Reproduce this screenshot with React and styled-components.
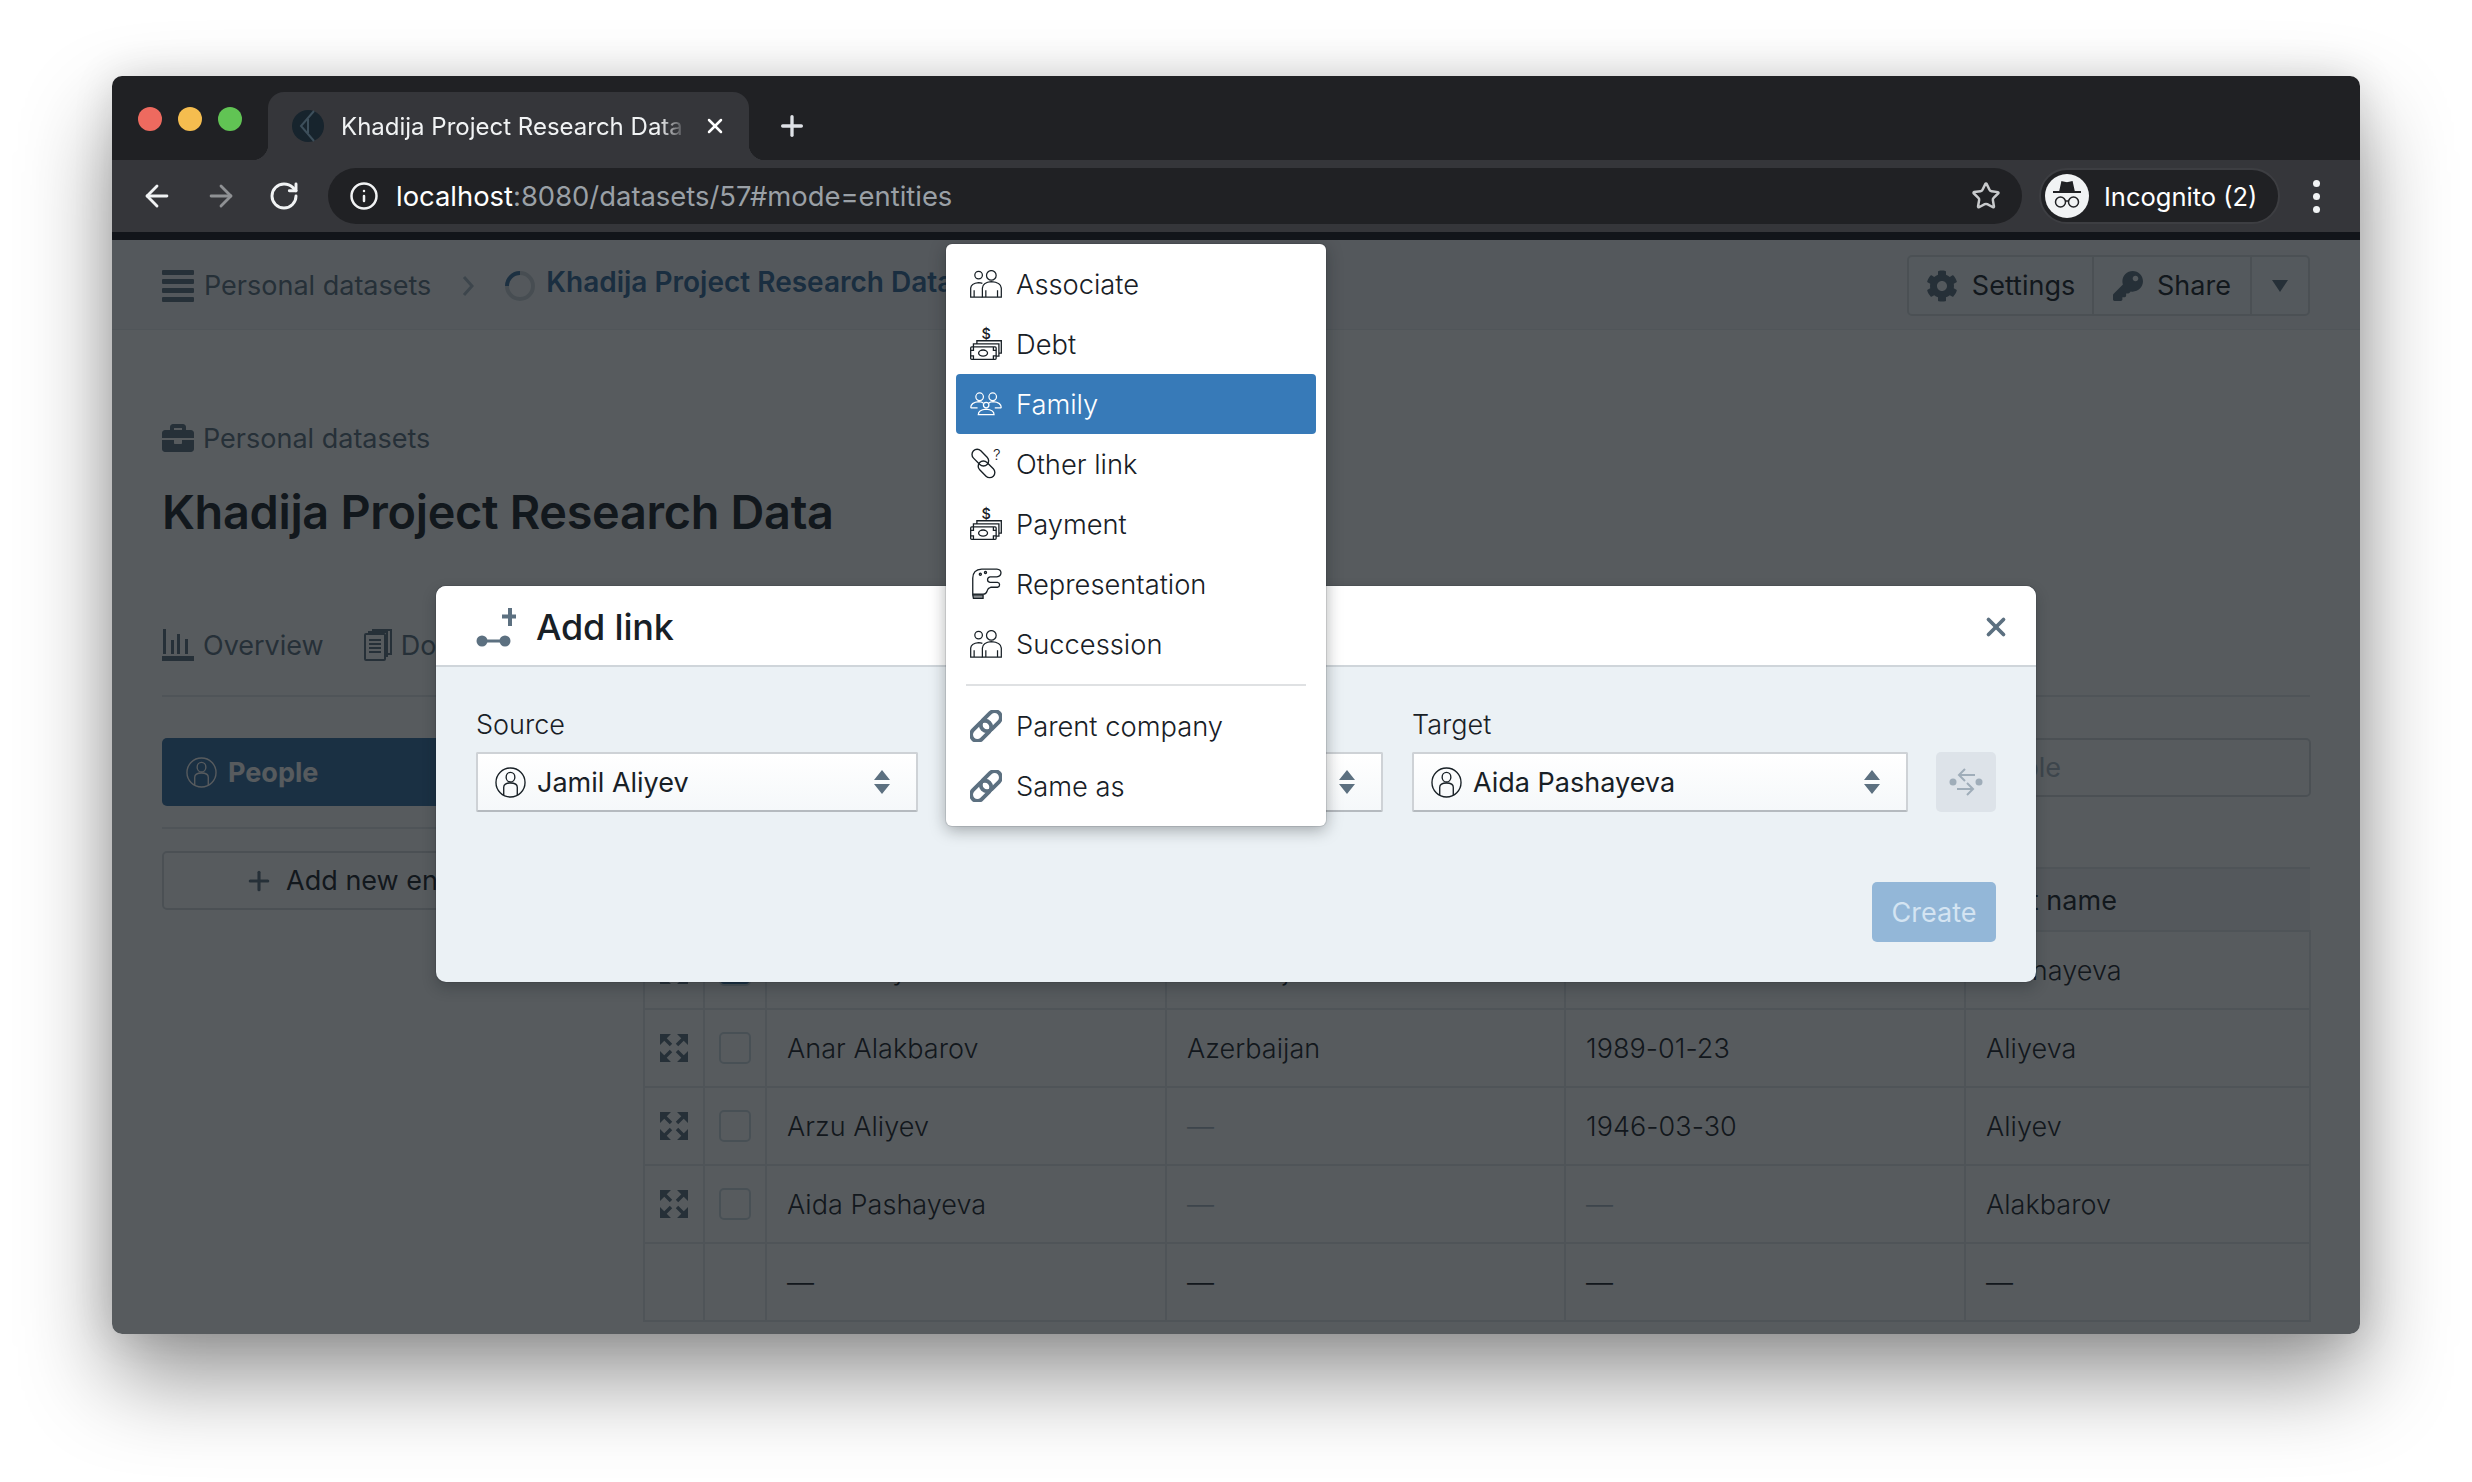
import React from 'react';
import styled, { createGlobalStyle } from 'styled-components';
import { ArrowLeft, ArrowRight, RotateCw, Info, Star, Plus, X } from 'lucide-react';
import { FaCog, FaKey, FaBriefcase } from 'react-icons/fa';

const Global = createGlobalStyle`
  html, body { margin: 0; padding: 0; background: #fff; }
  * { box-sizing: border-box; }
  body { font-family: Inter, "Liberation Sans", sans-serif; color: #182026; }
`;

const Screen = styled.div`
  width: 2472px;
  height: 1482px;
  padding: 76px 112px 148px;
  background: #fff;
  overflow: hidden;
`;

const Browser = styled.div`
  height: 1258px;
  display: flex;
  flex-direction: column;
  border-radius: 10px;
  overflow: hidden;
  box-shadow: 0 44px 90px rgba(0, 0, 0, 0.42), 0 0 40px rgba(0, 0, 0, 0.12);
`;

const TabBar = styled.div`
  height: 84px;
  flex: none;
  display: flex;
  align-items: flex-end;
  background: #202124;
  padding-left: 26px;
`;

const Light = styled.span`
  width: 24px;
  height: 24px;
  border-radius: 50%;
  margin: 0 16px 29px 0;
  background: ${(p) => p.$color};
`;

const Tab = styled.div`
  position: relative;
  width: 481px;
  height: 68px;
  margin-left: 10px;
  padding: 0 20px 0 24px;
  display: flex;
  align-items: center;
  background: #35363a;
  border-radius: 16px 16px 0 0;
  color: #f1f3f4;

  &::before, &::after {
    content: '';
    position: absolute;
    bottom: 0;
    width: 16px;
    height: 16px;
  }
  &::before {
    left: -16px;
    background: radial-gradient(circle at 0 0, transparent 16px, #35363a 16.5px);
  }
  &::after {
    right: -16px;
    background: radial-gradient(circle at 100% 0, transparent 16px, #35363a 16.5px);
  }
`;

const TabTitle = styled.span`
  width: 346px;
  margin: 0 16px 0 17px;
  flex: none;
  font-size: 24px;
  white-space: nowrap;
  overflow: hidden;
  -webkit-mask-image: linear-gradient(90deg, #000 92%, transparent 100%);
  mask-image: linear-gradient(90deg, #000 92%, transparent 100%);
`;

const NewTab = styled.div`
  display: flex;
  align-self: center;
  margin: 16px 0 0 27px;
  color: #dee1e6;
`;

const Toolbar = styled.div`
  height: 72px;
  flex: none;
  display: flex;
  align-items: center;
  padding-left: 28px;
  background: #35363a;
`;

const NavIcon = styled.span`
  display: flex;
  width: 64px;
  color: ${(p) => (p.$off ? '#8f9194' : '#f1f3f4')};
`;

const Omnibox = styled.div`
  width: 1694px;
  height: 56px;
  margin-left: -4px;
  padding: 0 21px 0 21px;
  display: flex;
  align-items: center;
  border-radius: 28px;
  background: #202124;
  color: #f1f3f4;
`;

const Url = styled.span`
  flex: 1;
  margin-left: 17px;
  font-size: 27.4px;
  color: #fff;
  span { color: #9aa0a6; }
`;

const Incognito = styled.div`
  width: 241px;
  height: 56px;
  margin-left: 17px;
  padding-left: 4px;
  display: flex;
  align-items: center;
  border-radius: 28px;
  border: 2px solid #3d3e42;
  background: #202124;
  color: #fff;
  font-size: 25.5px;
`;

const IncognitoFace = styled.span`
  width: 44px;
  height: 44px;
  margin-right: 15px;
  display: flex;
  align-items: center;
  justify-content: center;
  border-radius: 50%;
  background: #f1f3f4;
`;

const Kebab = styled.div`
  margin-left: 33px;
  display: flex;
  flex-direction: column;
  gap: 6px;
  span { width: 7px; height: 7px; border-radius: 50%; background: #f1f3f4; }
`;

const Strip = styled.div`
  height: 8px;
  flex: none;
  background: #12151a;
`;

const Page = styled.div`
  position: relative;
  flex: 1;
  background: #fff;
  overflow: hidden;
  font-size: 27px;
`;

const Overlay = styled.div`
  position: absolute;
  inset: 0;
  background: rgba(16, 22, 26, 0.7);
`;

const TopBar = styled.div`
  height: 89px;
  padding: 15px 50px 0;
  display: flex;
  align-items: flex-start;
  background: #f3f6f8;
  box-shadow: 0 1px 0 #e8ecef;
`;

const Crumb = styled.div`
  height: 61px;
  display: flex;
  align-items: center;
  gap: 10px;
  color: #5c7080;
`;

const MenuBars = styled.div`
  width: 32px;
  display: flex;
  flex-direction: column;
  gap: 4px;
  span { height: 5px; border-radius: 1px; background: #5c7080; }
`;

const Chevron = styled.svg`
  margin: 0 20px 0 21px;
`;

const CrumbTitle = styled.span`
  white-space: nowrap;
  position: relative;
  top: -4px;
  font-size: 28px;
  font-weight: 600;
  color: #34689a;
`;

const ButtonGroup = styled.div`
  position: relative;
  height: 61px;
  margin-left: auto;
  display: flex;
  border: 2px solid #d5dade;
  border-radius: 5px;
  background: #f5f8fa;
`;

const GroupButton = styled.div`
  width: ${(p) => p.$w}px;
  display: flex;
  align-items: center;
  justify-content: center;
  gap: 14px;
  color: #182026;
  border-left: ${(p) => (p.$first ? 'none' : '2px solid #d5dade')};
  svg { color: #5c7080; }
`;

const Content = styled.div`
  padding: 90px 50px 0;
`;

const Crumb2 = styled.div`
  height: 38px;
  display: flex;
  align-items: center;
  gap: 9px;
  color: #5c7080;
`;

const Heading = styled.h1`
  height: 56px;
  margin: 27px 0 0;
  font-size: 46.8px;
  line-height: 56px;
  font-weight: 600;
  letter-spacing: -0.3px;
`;

const Tabs = styled.div`
  height: 72px;
  margin-top: 85px;
  padding-bottom: 30px;
  display: flex;
  align-items: center;
  gap: 40px;
  border-bottom: 2px solid #e3e7ea;
  color: #5c7080;
`;

const TabLink = styled.div`
  display: flex;
  align-items: center;
  gap: 9px;
`;

const Main = styled.div`
  margin-top: 41px;
  display: grid;
  grid-template-columns: 398px 1fr;
  column-gap: 83px;
`;

const Side = styled.div`
  display: flex;
  flex-direction: column;
`;

const PeopleRow = styled.div`
  height: 68px;
  padding-left: 24px;
  display: flex;
  align-items: center;
  gap: 11px;
  border-radius: 5px;
  background: #356ea3;
  color: #fff;
  font-weight: 700;
`;

const SideLine = styled.div`
  height: 2px;
  margin: 21px 0 22px;
  background: #e3e7ea;
`;

const AddEntity = styled.div`
  height: 59px;
  display: flex;
  align-items: center;
  justify-content: center;
  gap: 12px;
  border: 2px solid #d5dade;
  border-radius: 5px;
  svg { color: #5c7080; }
`;

const SearchBox = styled.div`
  height: 59px;
  padding-left: 20px;
  display: flex;
  align-items: center;
  justify-content: flex-end;
  border: 2px solid #d5dade;
  border-radius: 5px;
  margin-bottom: 70px;
  color: #a7b6c2;
`;

const SearchText = styled.span`
  margin-right: 248px;
`;

const Table = styled.table`
  width: 1666px;
  table-layout: fixed;
  border-collapse: collapse;
  font-size: 27px;

  th, td {
    height: 78px;
    padding: 0 20px;
    border: 2px solid #e3e7ea;
    text-align: left;
    font-weight: 300;
    letter-spacing: 0.05px;
    white-space: nowrap;
  }
  th {
    height: 63px;
    padding-top: 2px;
    background: #f3f6f8;
    font-weight: 400;
    border-left: none;
    border-right: none;
  }
`;

const IconCell = styled.td`
  && { padding: 0; }
  text-align: center;
  svg { display: block; margin: 0 auto; color: #5c7080; }
`;

const Check = styled.span`
  display: block;
  width: 32px;
  height: 32px;
  margin: 0 auto;
  border-radius: 5px;
  border: 2px solid #ced9e0;
  background: ${(p) => (p.$on ? '#356ea3' : '#fff')};
`;

const Dash = styled.span`
  color: ${(p) => (p.$dark ? '#182026' : '#a7b6c2')};
`;

const Modal = styled.div`
  position: absolute;
  left: 324px;
  top: 346px;
  width: 1600px;
  height: 396px;
  display: flex;
  flex-direction: column;
  border-radius: 10px;
  background: #ebf1f5;
  box-shadow: 0 0 0 1px rgba(16, 22, 26, 0.1), 0 6px 14px rgba(16, 22, 26, 0.25);
  overflow: hidden;
`;

const ModalHead = styled.div`
  height: 81px;
  flex: none;
  padding: 2px 25px 0 40px;
  display: flex;
  align-items: center;
  background: #fff;
  border-bottom: 2px solid #cfd5da;
`;

const ModalTitle = styled.h3`
  flex: 1;
  margin: 0 0 0 20px;
  font-size: 36px;
  font-weight: 500;
  letter-spacing: -0.2px;
`;

const Close = styled.span`
  display: flex;
  color: #5c7080;
`;

const ModalBody = styled.div`
  flex: 1;
  padding: 39px 40px 40px 40px;
  display: flex;
  flex-direction: column;
`;

const Fields = styled.div`
  display: flex;
  align-items: flex-end;
`;

const Field = styled.div`
  width: ${(p) => p.$w}px;
  margin-right: ${(p) => p.$gap}px;
`;

const Label = styled.div`
  height: 38px;
  line-height: 38px;
  margin-bottom: 8px;
  font-size: 27px;
  font-weight: 300;
  color: #182026;
`;

const Select = styled.div`
  height: 60px;
  padding: 0 26px 0 17px;
  display: flex;
  align-items: center;
  gap: 11px;
  font-size: 27px;
  background: linear-gradient(#fff, #f5f8fa);
  border: 2px solid #ced2d6;
  border-bottom-color: #b5babf;
  border-radius: 2px;
`;

const SelectText = styled.span`
  flex: 1;
`;

const Swap = styled.div`
  width: 60px;
  height: 60px;
  display: flex;
  align-items: center;
  justify-content: center;
  border-radius: 5px;
  background: #dde3e9;
`;

const Footer = styled.div`
  margin-top: auto;
  display: flex;
  justify-content: flex-end;
`;

const Create = styled.div`
  width: 124px;
  height: 60px;
  display: flex;
  align-items: center;
  justify-content: center;
  border-radius: 5px;
  background: #93b7d8;
  color: #d4e4f2;
  font-size: 27px;
`;

const Menu = styled.div`
  position: absolute;
  left: 834px;
  top: 4px;
  width: 380px;
  padding: 10px;
  border-radius: 6px;
  background: #fff;
  box-shadow: 0 0 0 1px rgba(16, 22, 26, 0.1), 0 4px 16px rgba(16, 22, 26, 0.35);
`;

const MenuItem = styled.div`
  height: 60px;
  padding-left: 14px;
  display: flex;
  align-items: center;
  gap: 14px;
  border-radius: 4px;
  font-size: 27.3px;
  font-weight: 300;
  color: ${(p) => (p.$active ? '#fff' : '#182026')};
  background: ${(p) => (p.$active ? '#377ab8' : 'transparent')};
`;

const MenuDivider = styled.div`
  height: 2px;
  margin: 10px;
  background: #dfe1e3;
`;

const PersonCircle = ({ color = '#182026' }) => (
  <svg width="31" height="31" viewBox="0 0 32 32" fill="none" stroke={color} strokeWidth="1.4">
    <circle cx="16" cy="16" r="15" />
    <ellipse cx="16" cy="10.500" rx="4.500" ry="5" />
    <path d="M9 29v-8q0-4.500 7-4.500t7 4.500v8" />
  </svg>
);

const Carets = ({ color = '#5c7080' }) => (
  <svg width="16" height="24" viewBox="0 0 16 24" fill={color}>
    <path d="M8 0l8 10H0zM8 24L0 14h16z" />
  </svg>
);

const Associate = ({ c = '#182026' }) => (
  <svg width="32" height="28" viewBox="0 0 93 80" fill="none" stroke={c} strokeWidth="3.600">
    <circle cx="25" cy="14" r="11" />
    <circle cx="62" cy="15" r="14" />
    <path d="M36 78V52q1-17 26-19 28 2 29 19v26zM46 78V58M80 78V58" />
    <path d="M36 78H2V52q1-14 23-16 6 0 11 2M12 78V58" />
  </svg>
);

const Money = () => (
  <svg width="32" height="32" viewBox="0 0 93 93" overflow="visible" fill="none" stroke="#182026" strokeWidth="3.800">
    <text x="47" y="32" textAnchor="middle" fontSize="42" fontWeight="500" fill="#182026" stroke="none" fontFamily="Inter, sans-serif">$</text>
    <rect x="2" y="55" width="74" height="36" rx="3" />
    <ellipse cx="38" cy="73" rx="13" ry="9" />
    <path d="M2 65h8v-10M76 65h-8V55M2 81h8v10M76 81h-8v10" />
    <path d="M10 55V46h74v36h-8M20 46V37h71v36h-7" />
  </svg>
);

const Family = () => (
  <svg width="32" height="26" viewBox="0 0 93 70" fill="none" stroke="#fff" strokeWidth="3.600">
    <circle cx="28" cy="14" r="11" />
    <circle cx="66" cy="14" r="11" />
    <circle cx="47" cy="38" r="8" />
    <path d="M2 46q0-16 24-18 8 0 12 4M91 46q0-16-24-18-8 0-12 4M2 46h20M91 46H72" />
    <path d="M24 66q0-14 23-16 23 2 23 16z" />
  </svg>
);

const OtherLink = () => (
  <svg width="32" height="32" viewBox="0 0 93 93" overflow="visible" fill="none" stroke="#182026" strokeWidth="4">
    <rect x="-28" y="-15" width="56" height="30" rx="15" transform="translate(30 28) rotate(45)" />
    <rect x="-28" y="-15" width="56" height="30" rx="15" transform="translate(48 62) rotate(45)" />
    <text x="78" y="36" textAnchor="middle" fontSize="44" fill="#182026" stroke="none" fontFamily="Inter, sans-serif">?</text>
  </svg>
);

const Hand = () => (
  <svg width="32" height="32" viewBox="0 0 93 93" fill="none" stroke="#182026" strokeWidth="3.800">
    <path d="M8 78V30Q8 4 34 3h44q12 1 12 11T78 26H58q-7 2-7 8t7 8h22q6 1 6 7t-6 7H60q-8 2-10 10-3 10-12 10H8z" />
    <path d="M8 78h30v10H10z" fill="#182026" fillOpacity=".5" />
    <circle cx="30" cy="18" r="3" />
    <circle cx="45" cy="13" r="3" />
  </svg>
);

const ChainIcon = () => (
  <svg width="32" height="32" viewBox="0 0 33 33" fill="none" stroke="#5c7080" strokeWidth="4">
    <rect x="-12" y="-6.500" width="24" height="13" rx="6.500" transform="translate(21.500 11.500) rotate(-45)" />
    <rect x="-12" y="-6.500" width="24" height="13" rx="6.500" transform="translate(11.500 21.500) rotate(-45)" />
  </svg>
);

const Expand = () => (
  <svg width="28" height="28" viewBox="0 0 28 28" fill="currentColor" stroke="currentColor">
    <path d="M0 0h11L0 11zM28 0v11L17 0zM0 28V17l11 11zM28 28H17l11-11z" stroke="none" />
    <path d="M4 4l7 7M24 4l-7 7M4 24l7-7M24 24l-7-7" strokeWidth="3.500" />
  </svg>
);

const ChartIcon = () => (
  <svg width="32" height="32" viewBox="0 0 32 32" fill="#5c7080">
    <path d="M1 0h3v25H1zM9 11h3v14H9zM15 5h3v20h-3zM23 10h3v15h-3zM0 27h32v5H0z" />
  </svg>
);

const DocsIcon = () => (
  <svg width="28" height="32" viewBox="0 0 28 32" fill="none" stroke="#5c7080" strokeWidth="2">
    <rect x="1" y="5" width="20" height="26" rx="1" />
    <path d="M5 5V3h18v24h-2M9 3V1h18v24h-4M5 11h12M5 15h12M5 19h12M5 23h12" />
  </svg>
);

const LinkPlus = () => (
  <svg width="40" height="40" viewBox="0 0 40 40">
    <path d="M34 1v18M26 9.500h17" stroke="#5c7080" strokeWidth="4" />
    <circle cx="6" cy="34" r="5.500" fill="#5c7080" />
    <circle cx="29" cy="34" r="5.500" fill="#5c7080" />
    <path d="M6 34h23" stroke="#5c7080" strokeWidth="3" />
  </svg>
);

const SwapIcon = () => (
  <svg width="34" height="30" viewBox="0 0 34 30" fill="none" stroke="#9fadb9" strokeWidth="2">
    <circle cx="4" cy="15" r="3.500" fill="#9fadb9" stroke="none" />
    <circle cx="30" cy="15" r="3.500" fill="#9fadb9" stroke="none" />
    <path d="M26 8H11M16 2l-6 6 6 6M8 22h15M18 16l6 6-6 6" />
  </svg>
);

const Favicon = () => (
  <svg width="32" height="32" viewBox="0 0 32 32" fill="none">
    <circle cx="16" cy="16" r="16" fill="#17242d" />
    <path d="M22 1L9 16l13 15M16 9v14" stroke="#3d4f5b" strokeWidth="2" />
  </svg>
);

const Spy = () => (
  <svg width="34" height="34" viewBox="0 0 34 34" fill="none" stroke="#202124" strokeWidth="1.500">
    <path d="M12 3l5 1 5-1 2 9H10z" fill="#202124" />
    <path d="M3 13h28" strokeWidth="2" />
    <circle cx="10.500" cy="23" r="5" />
    <circle cx="23.500" cy="23" r="5" />
    <path d="M15.500 22h3" />
  </svg>
);

const Spinner = () => (
  <svg width="32" height="32" viewBox="0 0 32 32" fill="none" strokeWidth="4">
    <circle cx="16" cy="16" r="13" stroke="#c9d0d6" />
    <path d="M3 16A13 13 0 0 1 16 3" stroke="#3b6f9f" />
  </svg>
);

const menuItems = [
  { label: 'Associate', icon: <Associate /> },
  { label: 'Debt', icon: <Money /> },
  { label: 'Family', icon: <Family />, active: true },
  { label: 'Other link', icon: <OtherLink /> },
  { label: 'Payment', icon: <Money /> },
  { label: 'Representation', icon: <Hand /> },
  { label: 'Succession', icon: <Associate /> },
];

const rows = [
  { name: 'Jamil Aliyev', nat: 'Azerbaijan', dob: '1958-04-12', last: 'Pashayeva', on: true },
  { name: 'Anar Alakbarov', nat: 'Azerbaijan', dob: '1989-01-23', last: 'Aliyeva' },
  { name: 'Arzu Aliyev', nat: null, dob: '1946-03-30', last: 'Aliyev' },
  { name: 'Aida Pashayeva', nat: null, dob: null, last: 'Alakbarov' },
];

export default function App() {
  return (
    <Screen>
      <Global />
      <Browser>
        <TabBar>
          <Light $color="#ee6a5f" />
          <Light $color="#f5bd4f" />
          <Light $color="#61c454" />
          <Tab>
            <Favicon />
            <TabTitle>Khadija Project Research Data</TabTitle>
            <X size={24} strokeWidth={2.500} color="#fff" />
          </Tab>
          <NewTab><Plus size={32} strokeWidth={2.500} /></NewTab>
        </TabBar>
        <Toolbar>
          <NavIcon><ArrowLeft size={34} strokeWidth={2} /></NavIcon>
          <NavIcon $off><ArrowRight size={34} strokeWidth={2} /></NavIcon>
          <NavIcon><RotateCw size={32} strokeWidth={2.200} /></NavIcon>
          <Omnibox>
            <Info size={30} strokeWidth={2} />
            <Url>localhost<span>:8080/datasets/57#mode=entities</span></Url>
            <Star size={30} strokeWidth={2} color="#c8cacc" />
          </Omnibox>
          <Incognito>
            <IncognitoFace><Spy /></IncognitoFace>
            Incognito (2)
          </Incognito>
          <Kebab><span /><span /><span /></Kebab>
        </Toolbar>
        <Strip />
        <Page>
          <TopBar>
            <Crumb>
              <MenuBars><span /><span /><span /><span /></MenuBars>
              Personal datasets
              <Chevron width="12" height="22" viewBox="0 0 12 22" fill="none" stroke="#a7b6c2" strokeWidth="3">
                <path d="M2 2l8 9-8 9" />
              </Chevron>
              <Spinner />
              <CrumbTitle>Khadija Project Research Data</CrumbTitle>
            </Crumb>
            <ButtonGroup>
              <GroupButton $first $w={183}><FaCog size={32} />Settings</GroupButton>
              <GroupButton $w={158}><FaKey size={30} />Share</GroupButton>
              <GroupButton $w={58}>
                <svg width="16" height="12" viewBox="0 0 16 12" fill="#5c7080"><path d="M0 0h16L8 12z" /></svg>
              </GroupButton>
            </ButtonGroup>
          </TopBar>
          <Content>
            <Crumb2><FaBriefcase size={32} color="#5c7080" />Personal datasets</Crumb2>
            <Heading>Khadija Project Research Data</Heading>
            <Tabs>
              <TabLink><ChartIcon />Overview</TabLink>
              <TabLink><DocsIcon />Documents</TabLink>
            </Tabs>
            <Main>
              <Side>
                <PeopleRow><PersonCircle color="#fff" />People</PeopleRow>
                <SideLine />
                <AddEntity><Plus size={30} strokeWidth={2.500} />Add new entity</AddEntity>
              </Side>
              <div>
                <SearchBox><SearchText>Search people</SearchText></SearchBox>
                <Table>
                  <colgroup>
                    <col width="60" /><col width="62" /><col width="400" />
                    <col width="399" /><col width="400" /><col width="345" />
                  </colgroup>
                  <thead>
                    <tr><th /><th /><th>Name</th><th>Nationality</th><th>Birth date</th><th>Last name</th></tr>
                  </thead>
                  <tbody>
                    {rows.map((r) => (
                      <tr key={r.name}>
                        <IconCell><Expand /></IconCell>
                        <IconCell><Check $on={r.on} /></IconCell>
                        <td>{r.name}</td>
                        <td>{r.nat || <Dash>—</Dash>}</td>
                        <td>{r.dob || <Dash>—</Dash>}</td>
                        <td>{r.last}</td>
                      </tr>
                    ))}
                    <tr>
                      <td /><td />
                      <td><Dash $dark>—</Dash></td>
                      <td><Dash $dark>—</Dash></td>
                      <td><Dash $dark>—</Dash></td>
                      <td><Dash $dark>—</Dash></td>
                    </tr>
                  </tbody>
                </Table>
              </div>
            </Main>
          </Content>
          <Overlay />
          <Modal>
            <ModalHead>
              <LinkPlus />
              <ModalTitle>Add link</ModalTitle>
              <Close><X size={30} strokeWidth={3} /></Close>
            </ModalHead>
            <ModalBody>
              <Fields>
                <Field $w={442} $gap={30}>
                  <Label>Source</Label>
                  <Select><PersonCircle /><SelectText>Jamil Aliyev</SelectText><Carets /></Select>
                </Field>
                <Field $w={435} $gap={29}>
                  <Label />
                  <Select><SelectText /><Carets /></Select>
                </Field>
                <Field $w={496} $gap={28}>
                  <Label>Target</Label>
                  <Select><PersonCircle /><SelectText>Aida Pashayeva</SelectText><Carets /></Select>
                </Field>
                <Swap><SwapIcon /></Swap>
              </Fields>
              <Footer><Create>Create</Create></Footer>
            </ModalBody>
          </Modal>
          <Menu>
            {menuItems.map((m) => (
              <MenuItem key={m.label} $active={m.active}>{m.icon}{m.label}</MenuItem>
            ))}
            <MenuDivider />
            <MenuItem><ChainIcon />Parent company</MenuItem>
            <MenuItem><ChainIcon />Same as</MenuItem>
          </Menu>
        </Page>
      </Browser>
    </Screen>
  );
}
